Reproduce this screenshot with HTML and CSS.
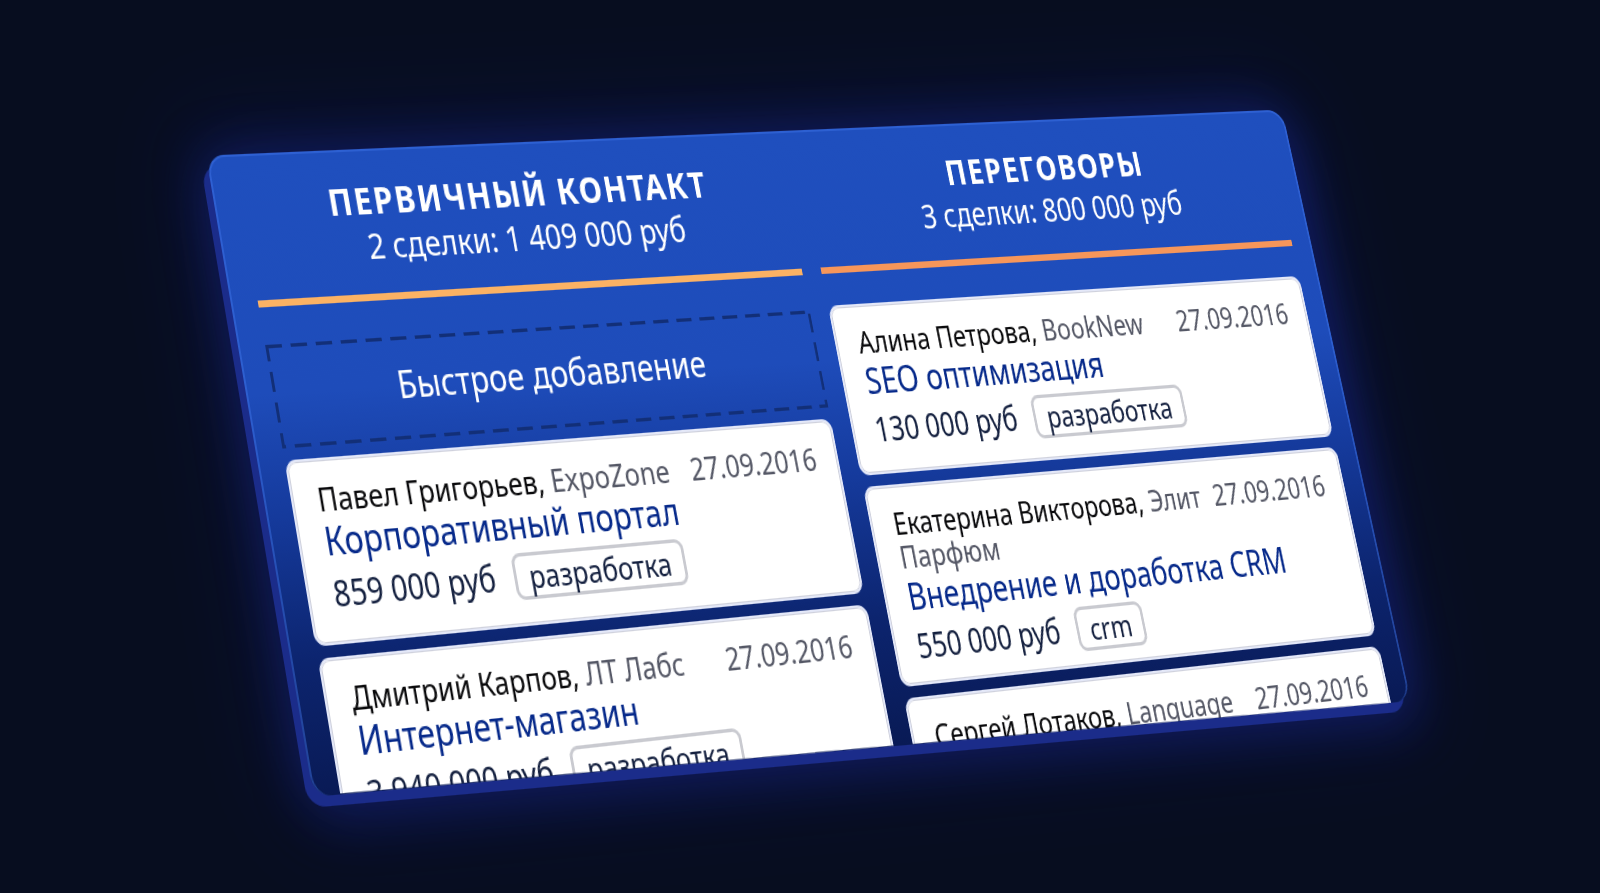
FILE: index.html
```html
<!DOCTYPE html>
<html lang="ru">
  <head>
    <meta charset="utf-8">
    <title>Воронка сделок</title>
    <link rel="stylesheet" href="styles.css">
  </head>
  <body>
    <div class="stage">
      <div class="shell"></div>
      <main class="board">
        <section class="column">
          <header class="head">
            <h2>ПЕРВИЧНЫЙ КОНТАКТ</h2>
            <p>2 сделки: 1 409 000 руб</p>
          </header>
          <button class="quick" type="button">Быстрое добавление</button>
          <article class="card">
            <div class="top">
              <p class="who">Павел Григорьев, <span>ExpoZone</span></p>
              <time datetime="2016-09-27">27.09.2016</time>
            </div>
            <a class="deal" href="#">Корпоративный портал</a>
            <div class="bottom">
              <span>859 000 руб</span>
              <span class="tag">разработка</span>
            </div>
          </article>
          <article class="card">
            <div class="top">
              <p class="who">Дмитрий Карпов, <span>ЛТ Лабс</span></p>
              <time datetime="2016-09-27">27.09.2016</time>
            </div>
            <a class="deal" href="#">Интернет-магазин</a>
            <div class="bottom">
              <span>3 940 000 руб</span>
              <span class="tag">разработка</span>
            </div>
          </article>
        </section>

        <section class="column talks">
          <header class="head">
            <h2>ПЕРЕГОВОРЫ</h2>
            <p>3 сделки: 800 000 руб</p>
          </header>
          <article class="card">
            <div class="top">
              <p class="who">Алина Петрова, <span>BookNew</span></p>
              <time datetime="2016-09-27">27.09.2016</time>
            </div>
            <a class="deal" href="#">SEO оптимизация</a>
            <div class="bottom">
              <span>130 000 руб</span>
              <span class="tag">разработка</span>
            </div>
          </article>
          <article class="card">
            <div class="top">
              <p class="who">Екатерина Викторова, <span>Элит Парфюм</span></p>
              <time datetime="2016-09-27">27.09.2016</time>
            </div>
            <a class="deal" href="#">Внедрение и доработка CRM</a>
            <div class="bottom">
              <span>550 000 руб</span>
              <span class="tag">crm</span>
            </div>
          </article>
          <article class="card">
            <div class="top">
              <p class="who">Сергей Лотаков, <span>Language</span></p>
              <time datetime="2016-09-27">27.09.2016</time>
            </div>
          </article>
        </section>
      </main>
    </div>
  </body>
</html>
```
FILE: styles.css
```css
* {
  box-sizing: border-box;
}
body {
  margin: 0;
  background-color: #070d1f;
  font-family: 'Noto Sans', 'Open Sans', sans-serif;
  font-size: 28px;
  color: #14203f;
}
h2, p {
  margin: 0;
}
.stage {
  display: grid;
  align-items: start;
  justify-items: start;
  min-height: 100vh;
  overflow: hidden;
}

/* the tilted slab and the board lying on it */
.shell, .board {
  grid-area: 1 / 1;
  width: 75vw;
  transform-origin: 0 0;
}
.shell {
  height: 560px;
  border-radius: 18px;
  border: 2px solid rgba(64, 118, 235, 0.45);
  border-bottom: 0;
  background: linear-gradient(#1f4fbe 0%, #1e4cba 38%, #153a9c 57%, #0c246e 80%, #091a55 100%) border-box;
  box-shadow: -7px 9px 0 #1b2c8a, 0 8px 50px 8px rgba(26, 42, 170, 0.42), 0 0 90px 20px rgba(24, 34, 130, 0.25);
  transform: matrix3d(0.981425, -0.031177, 0, 0.00006612, 0.175777, 1.103857, 0, -0.00005163, 0, 0, 1, 0, 206, 155.6, 0, 1);
}
.board {
  display: grid;
  grid-template-columns: 51fr 50fr;
  gap: 22px;
  align-items: start;
  clip-path: polygon(0 0, 100% 0, 100% 565px, 0 538px);
  transform: matrix3d(0.994268, -0.024565, 0, 0.00010739, 0.180487, 1.143336, 0, -0.00005319, 0, 0, 1, 0, 233.34, 155.68, 0, 1);
}

.column {
  display: flex;
  flex-direction: column;
  gap: 10px;
}
.head {
  height: 131px;
  margin-bottom: 22px;
  padding-top: 24px;
  border-bottom: 6px solid #fbb264;
  text-align: center;
  color: #fff;
}
.talks .head {
  margin-bottom: 19px;
  border-color: #f6965a;
}
.head h2 {
  font-size: 33px;
  line-height: 40px;
  letter-spacing: 2px;
}
.head p {
  font-size: 31px;
  line-height: 38px;
}
.quick {
  height: 88px;
  padding: 0 0 8px;
  border: 0;
  background: url("data:image/svg+xml,%3Csvg xmlns='http://www.w3.org/2000/svg' width='100%25' height='100%25'%3E%3Crect width='100%25' height='100%25' fill='none' stroke='%23122f78' stroke-width='6' stroke-dasharray='17 9'/%3E%3C/svg%3E");
  font-family: inherit;
  font-size: 33px;
  color: #fff;
  cursor: pointer;
}

.card {
  min-height: 156px;
  padding: 17px 23px 9px 25px;
  border: 2px solid #e4e8f8;
  border-radius: 11px;
  background-color: #fff;
  box-shadow: inset 0 0 0 1px #cfd1dc;
}
.talks .card {
  min-height: 154px;
}
.top {
  display: flex;
  justify-content: space-between;
  gap: 12px;
  line-height: 30px;
}
.who {
  color: #0a0a0c;
}
.who span, time {
  color: #555866;
}
.deal {
  display: block;
  font-size: 33px;
  line-height: 42px;
  color: #06298a;
  text-decoration: none;
}
.bottom {
  display: flex;
  align-items: center;
  gap: 20px;
  font-size: 30px;
  line-height: 46px;
}
.tag {
  padding: 0 13px;
  border: 3px solid #c9cad0;
  border-radius: 9px;
  font-size: 28px;
  line-height: 34px;
}
```
